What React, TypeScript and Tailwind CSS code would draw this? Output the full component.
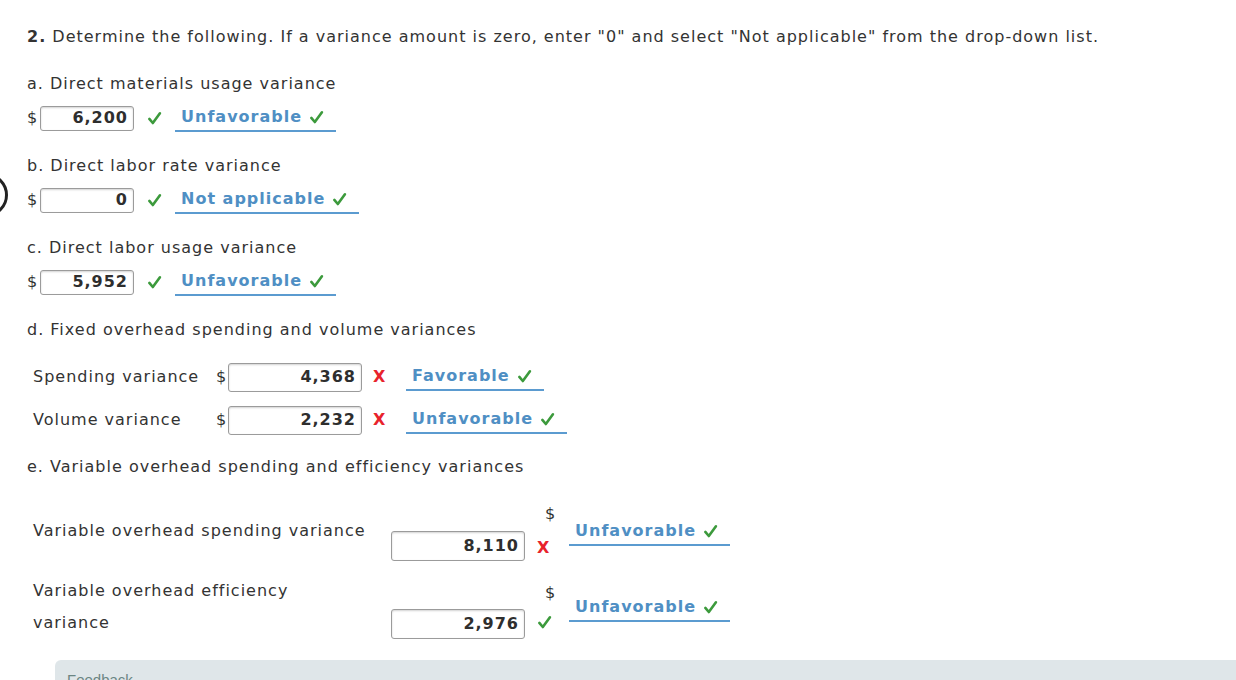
import React from 'react';

const font = { fontFamily: '"DejaVu Sans", Verdana, sans-serif' };

function Check({ className = '' }: { className?: string }) {
  return (
    <svg viewBox="0 0 16 16" className={`w-[15px] h-[15px] ${className}`} fill="none">
      <path d="M2.5 8.5 L6.2 12.8 L13.8 2.5" stroke="#3c9a3c" strokeWidth="2.8" strokeLinecap="round" strokeLinejoin="round" />
    </svg>
  );
}

function Cross() {
  return <span className="text-[#e8222c] font-bold text-[16px] leading-none">X</span>;
}

function Amount({ value, w, h }: { value: string; w: string; h: string }) {
  return (
    <div
      className={`${w} ${h} border border-[#9b9b9b] rounded-[3px] bg-white shadow-[inset_0_1px_2px_rgba(0,0,0,0.18)] flex items-center justify-end pr-[5px] font-bold text-[16px] text-[#2e2e2e]`}
    >
      {value}
    </div>
  );
}

function Dropdown({ text }: { text: string }) {
  return (
    <div className="inline-flex items-center h-[28px] border-b-2 border-[#5b9bd0] pl-[6px] pr-[12px] gap-[7px]">
      <span className="font-bold text-[16px] text-[#4f8fc4]">{text}</span>
      <Check />
    </div>
  );
}

function SimpleRow({ label, value, ok, result }: { label: string; value: string; ok: boolean; result: string }) {
  return (
    <div className="mb-[24px]">
      <div className="h-[20px] leading-[20px]">{label}</div>
      <div className="mt-[10px] flex items-center h-[28px]">
        <span className="w-[13px]">$</span>
        <Amount value={value} w="w-[94px]" h="h-[25px]" />
        <div className="w-[41px] pl-[13px] flex items-center">{ok ? <Check /> : <Cross />}</div>
        <Dropdown text={result} />
      </div>
    </div>
  );
}

function FixedRow({ label, value, result }: { label: string; value: string; result: string }) {
  return (
    <div className="flex items-center h-[30px]">
      <span className="w-[183px]">{label}</span>
      <span className="w-[12px]">$</span>
      <Amount value={value} w="w-[134px]" h="h-[29px]" />
      <div className="w-[44px] pl-[11px] flex items-center">
        <Cross />
      </div>
      <Dropdown text={result} />
    </div>
  );
}

export default function App() {
  return (
    <div className="relative w-[1236px] h-[680px] overflow-hidden bg-white text-[16px] tracking-[1px] text-[#333]" style={font}>
      <div className="absolute left-[-36px] top-[173px] w-[44px] h-[44px] rounded-full border-[3px] border-[#222]" />

      <div className="pl-[27px] pt-[27px]">
        <p className="h-[20px] leading-[20px] mb-[27px]">
          <b>2.</b> Determine the following. If a variance amount is zero, enter "0" and select "Not applicable" from the drop-down list.
        </p>

        <SimpleRow label="a. Direct materials usage variance" value="6,200" ok result="Unfavorable" />
        <SimpleRow label="b. Direct labor rate variance" value="0" ok result="Not applicable" />
        <SimpleRow label="c. Direct labor usage variance" value="5,952" ok result="Unfavorable" />

        <div className="h-[20px] leading-[20px]">d. Fixed overhead spending and volume variances</div>
        <div className="pl-[6px] mt-[22px] flex flex-col gap-[13px]">
          <FixedRow label="Spending variance" value="4,368" result="Favorable" />
          <FixedRow label="Volume variance" value="2,232" result="Unfavorable" />
        </div>

        <div className="mt-[22px] h-[20px] leading-[20px]">e. Variable overhead spending and efficiency variances</div>

        <div className="pl-[6px] mt-[27px] grid grid-cols-[358px_134px_44px_180px]">
          <div className="h-[60px] pt-[17px] leading-[20px] whitespace-nowrap">Variable overhead spending variance</div>
          <div className="pt-[27px]">
            <Amount value="8,110" w="w-[134px]" h="h-[30px]" />
          </div>
          <div className="flex flex-col">
            <span className="pl-[20px] leading-[20px]">$</span>
            <div className="pl-[12px] mt-[12px]">
              <Cross />
            </div>
          </div>
          <div className="pt-[14px]">
            <Dropdown text="Unfavorable" />
          </div>

          <div className="mt-[10px] h-[70px] pt-[1px] leading-[32px] w-[300px]">Variable overhead efficiency variance</div>
          <div className="mt-[10px] pt-[35px]">
            <Amount value="2,976" w="w-[134px]" h="h-[30px]" />
          </div>
          <div className="mt-[10px] flex flex-col pt-[9px]">
            <span className="pl-[20px] leading-[20px]">$</span>
            <div className="pl-[12px] mt-[12px]">
              <Check />
            </div>
          </div>
          <div className="mt-[10px] pt-[20px]">
            <Dropdown text="Unfavorable" />
          </div>
        </div>
      </div>

      <div className="absolute left-[55px] top-[660px] right-[-10px] h-[40px] bg-[#dfe6e9] rounded-tl-[6px] pl-[12px] pt-[8px]">
        <span className="text-[15px] tracking-normal text-[#6b8583]" style={{ fontFamily: '"Liberation Sans", Arial, sans-serif' }}>Feedback</span>
      </div>
    </div>
  );
}
